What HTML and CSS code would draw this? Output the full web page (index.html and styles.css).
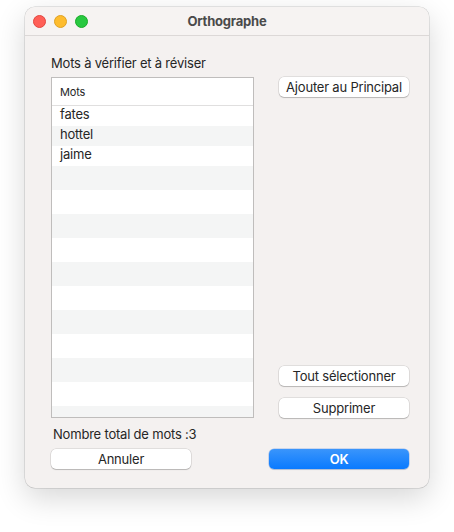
FILE: index.html
```html
<!DOCTYPE html>
<html lang="fr">
<head>
<meta charset="utf-8">
<title>Orthographe</title>
<link rel="stylesheet" href="styles.css">
</head>
<body>
<div class="window">
  <div class="titlebar">
    <div class="lights">
      <span class="light red"></span>
      <span class="light yellow"></span>
      <span class="light green"></span>
    </div>
    <div class="title">Orthographe</div>
  </div>
  <div class="content">
    <div class="label">Mots à vérifier et à réviser</div>
    <div class="main">
      <div class="list">
        <div class="list-header">Mots</div>
        <div class="row">fates</div>
        <div class="row alt">hottel</div>
        <div class="row">jaime</div>
        <div class="filler"></div>
      </div>
      <div class="side">
        <button class="btn">Ajouter au Principal</button>
        <div class="spacer"></div>
        <button class="btn">Tout sélectionner</button>
        <button class="btn">Supprimer</button>
      </div>
    </div>
    <div class="total">Nombre total de mots :3</div>
    <div class="footer">
      <button class="btn wide">Annuler</button>
      <button class="btn wide primary">OK</button>
    </div>
  </div>
</div>
</body>
</html>
```

FILE: styles.css
```css
html, body {
  margin: 0;
  padding: 0;
  background: #ffffff;
}
body {
  min-height: 532px;
  padding-top: 7px;
  box-sizing: border-box;
  font-family: Inter, "Noto Sans", "Liberation Sans", sans-serif;
  font-size: 13px;
  letter-spacing: -0.2px;
  color: #262626;
}
.window {
  margin: 0 0 0 25px;
  width: 404px;
  height: 481px;
  box-sizing: border-box;
  background: #f4f1f0;
  border-radius: 10px;
  box-shadow: 0 0 0 0.5px rgba(0,0,0,0.18), 0 10px 30px rgba(0,0,0,0.16);
  overflow: hidden;
  display: flex;
  flex-direction: column;
}
.titlebar {
  height: 28px;
  border-bottom: 1px solid #dcd8d7;
  background: #f6f3f2;
  display: flex;
  align-items: center;
  position: relative;
  flex: none;
}
.lights {
  display: flex;
  gap: 8px;
  padding-left: 8px;
}
.light {
  width: 11px;
  height: 11px;
  border-radius: 50%;
  border: 0.5px solid transparent;
}
.red { background: #ff5f57; border-color: #e2463f; }
.yellow { background: #febc2e; border-color: #dea123; }
.green { background: #28c840; border-color: #1aab29; }
.title {
  position: absolute;
  left: 0;
  right: 0;
  text-align: center;
  font-weight: 700;
  font-size: 13px;
  color: #4a4a4a;
  pointer-events: none;
}
.content {
  padding: 19px 20px 19px 26px;
  display: flex;
  flex-direction: column;
  flex: 1;
}
.label {
  line-height: 16px;
  height: 16px;
  margin-bottom: 6px;
}
.main {
  display: flex;
  height: 341px;
}
.list {
  width: 203px;
  box-sizing: border-box;
  border: 1px solid #bfbdbc;
  background: #ffffff;
  display: flex;
  flex-direction: column;
}
.list-header {
  height: 27px;
  border-bottom: 1px solid #e0dfdf;
  font-size: 11px;
  line-height: 29px;
  padding-left: 8px;
  flex: none;
}
.row {
  height: 20px;
  line-height: 16px;
  padding-left: 8px;
  flex: none;
}
.row.alt { background: #f4f5f5; }
.filler {
  flex: 1;
  background: repeating-linear-gradient(#f4f5f5 0, #f4f5f5 24px, #ffffff 24px, #ffffff 48px);
}
.side {
  margin-left: 25px;
  width: 130px;
  display: flex;
  flex-direction: column;
  gap: 12px;
}
.spacer { flex: 1; margin-bottom: -3px; }
.btn {
  font-family: inherit;
  font-size: 13px;
  letter-spacing: -0.2px;
  color: #262626;
  height: 20px;
  padding: 0;
  border: none;
  border-radius: 5px;
  background: #ffffff;
  box-shadow: 0 0 0 0.5px rgba(0,0,0,0.16), 0 1px 1px rgba(0,0,0,0.18);
  line-height: 20px;
  width: 130px;
  flex: none;
}
.total {
  margin-top: 8px;
  line-height: 16px;
  height: 16px;
  padding-left: 2px;
}
.footer {
  margin-top: 7px;
  display: flex;
  justify-content: space-between;
}
.btn.wide { width: 140px; }
.btn.primary {
  background: linear-gradient(#3a95fb, #0a7aff);
  color: #ffffff;
  font-weight: 600;
  box-shadow: 0 0 0 0.5px rgba(0,90,220,0.35), 0 1px 1px rgba(0,0,0,0.12);
}
```
